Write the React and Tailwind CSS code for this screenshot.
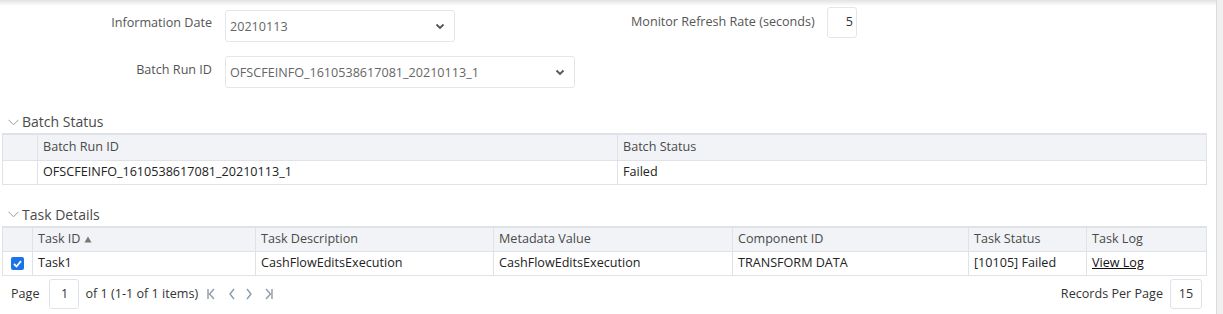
import React from "react";

const FONT = { fontFamily: '"Open Sans", "Noto Sans", sans-serif' };

function SelectChevron() {
  return (
    <svg width="10" height="7" viewBox="0 0 10 7" className="shrink-0">
      <path d="M1.5 1.5 L5 5 L8.5 1.5" fill="none" stroke="#555" strokeWidth="1.8" />
    </svg>
  );
}

function SectionChevron() {
  return (
    <svg width="11" height="7" viewBox="0 0 11 7" className="shrink-0">
      <path d="M0.5 0.8 L5.5 5.8 L10.5 0.8" fill="none" stroke="#9a9a9a" strokeWidth="1" />
    </svg>
  );
}

function PagerIcon({ d, className = "" }) {
  return (
    <svg width="8" height="12" viewBox="0 0 8 12" className={"shrink-0 " + className}>
      <path d={d} fill="none" stroke="#8d9aa8" strokeWidth="1.4" />
    </svg>
  );
}

function Section({ title }) {
  return (
    <div className="flex items-center gap-[3px] pl-[8px] text-[14px] text-[#4a4a4a] leading-[18px]">
      <SectionChevron />
      <span>{title}</span>
    </div>
  );
}

const th = "border border-t-2 border-[#dfe3e8] font-normal text-left pl-[5px]";
const td = "border border-[#dfe3e8] pl-[5px]";

export default function App() {
  return (
    <div className="w-[1223px] h-[314px] overflow-hidden bg-white flex text-[12.6px]" style={FONT}>
      <div className="flex-1 relative">
        {/* top shadow */}
        <div className="absolute top-0 left-0 right-0 h-[6px] bg-gradient-to-b from-[#e2e2e2] to-white" />

        {/* FORM */}
        <div className="relative flex h-[50px]">
          <div className="w-[212px] text-right pt-[14px] text-[#555]">Information Date</div>
          <div className="ml-[13px] mt-[10px] w-[230px] h-[32px] border border-[#e3e6ea] rounded-[3px] flex items-center justify-between pl-[4px] pr-[9px] text-[#666]">
            <span className="pt-[2px]">20210113</span>
            <SelectChevron />
          </div>
          <div className="w-[196px] pl-[176px] box-content pt-[13px] text-[#555] whitespace-nowrap">Monitor Refresh Rate (seconds)</div>
          <div className="mt-[7px] w-[30px] h-[31px] border border-[#e3e6ea] rounded-[3px] flex items-center justify-end pr-[3px] text-[#333]">5</div>
        </div>
        <div className="flex h-[40px]">
          <div className="w-[212px] text-right pt-[11px] text-[#555]">Batch Run ID</div>
          <div className="ml-[13px] mt-[6px] w-[350px] h-[32px] border border-[#e3e6ea] rounded-[3px] flex items-center justify-between pl-[4px] pr-[9px] text-[#666]">
            <span className="pt-[2px]">OFSCFEINFO_1610538617081_20210113_1</span>
            <SelectChevron />
          </div>
        </div>

        {/* BATCH STATUS */}
        <div className="mt-[23px]">
          <Section title="Batch Status" />
        </div>
        <div className="ml-[2px] mt-[2px] w-[1205px]">
          <table className="w-full border-collapse table-fixed">
            <colgroup>
              <col className="w-[35px]" />
              <col className="w-[580px]" />
              <col />
            </colgroup>
            <thead>
              <tr className="h-[26px] bg-[#f1f3f6] text-[#4a4a4a]">
                <th className={th} />
                <th className={th}>Batch Run ID</th>
                <th className={th}>Batch Status</th>
              </tr>
            </thead>
            <tbody>
              <tr className="h-[24px] text-[#222]">
                <td className={td} />
                <td className={td}>OFSCFEINFO_1610538617081_20210113_1</td>
                <td className={td}>Failed</td>
              </tr>
            </tbody>
          </table>
        </div>

        {/* TASK DETAILS */}
        <div className="mt-[21px]">
          <Section title="Task Details" />
        </div>
        <div className="ml-[2px] mt-[2px] w-[1205px]">
          <table className="w-full border-collapse table-fixed">
            <colgroup>
              <col className="w-[30px]" />
              <col className="w-[223px]" />
              <col className="w-[238px]" />
              <col className="w-[239px]" />
              <col className="w-[236px]" />
              <col className="w-[118px]" />
              <col />
            </colgroup>
            <thead>
              <tr className="h-[25px] bg-[#f1f3f6] text-[#4a4a4a]">
                <th className={th} />
                <th className={th}>
                  <span className="inline-flex items-center gap-[4px]">
                    Task ID
                    <svg width="8" height="7" viewBox="0 0 8 7">
                      <path d="M4 0.5 L7.5 6.5 L0.5 6.5 Z" fill="#777" />
                    </svg>
                  </span>
                </th>
                <th className={th}>Task Description</th>
                <th className={th}>Metadata Value</th>
                <th className={th}>Component ID</th>
                <th className={th}>Task Status</th>
                <th className={th}>Task Log</th>
              </tr>
            </thead>
            <tbody>
              <tr className="h-[24px] text-[#222]">
                <td className="border border-[#dfe3e8] pl-[8px]">
                  <span className="flex items-center justify-center w-[13px] h-[13px] rounded-[2px] bg-[#1a73e8]">
                    <svg width="9" height="8" viewBox="0 0 9 8">
                      <path d="M1 4 L3.5 6.5 L8 1.2" fill="none" stroke="white" strokeWidth="1.8" />
                    </svg>
                  </span>
                </td>
                <td className={td}>Task1</td>
                <td className={td}>CashFlowEditsExecution</td>
                <td className={td}>CashFlowEditsExecution</td>
                <td className={td}>TRANSFORM DATA</td>
                <td className={td}>[10105] Failed</td>
                <td className={td}>
                  <span className="underline text-[#111]">View Log</span>
                </td>
              </tr>
            </tbody>
          </table>
        </div>

        {/* PAGER */}
        <div className="flex items-center mt-[3px] w-[1207px] h-[30px] text-[#333]">
          <span className="pl-[11px]">Page</span>
          <span className="ml-[10px] w-[30px] h-[30px] border border-[#dfe3e8] rounded-[3px] flex items-center justify-center">1</span>
          <span className="ml-[6px]">of 1 (1-1 of 1 items)</span>
          <PagerIcon className="ml-[9px]" d="M1 1 L1 11 M7 1 L2.5 6 L7 11" />
          <PagerIcon className="ml-[13px]" d="M6 1 L2 6 L6 11" />
          <PagerIcon className="ml-[9px]" d="M2 1 L6 6 L2 11" />
          <PagerIcon className="ml-[12px]" d="M1 1 L5.5 6 L1 11 M7 1 L7 11" />
          <span className="ml-auto">Records Per Page</span>
          <span className="ml-[7px] mr-[5px] w-[32px] h-[30px] border border-[#dfe3e8] rounded-[3px] flex items-center justify-center">15</span>
        </div>
      </div>

      {/* scrollbar strip */}
      <div className="w-[7px] h-full border-l border-[#dcdcdc] bg-[#f0f0f0]" />
    </div>
  );
}
